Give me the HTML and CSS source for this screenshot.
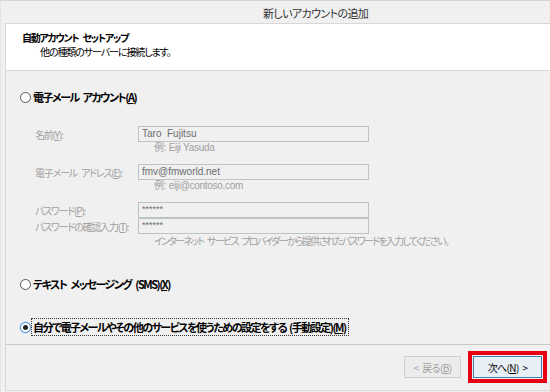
FILE: index.html
```html
<!DOCTYPE html>
<html lang="ja">
<head>
    <meta charset="UTF-8">
    <title>新しいアカウントの追加</title>
    <link rel="stylesheet" href="styles.css">
</head>
<body>
    <div class="window">
        <div class="titlebar">新しいアカウントの追加</div>

        <div class="dialog">
            <div class="header">
                <div class="header-title">自動アカウント セットアップ</div>
                <div class="header-sub">他の種類のサーバーに接続します。</div>
            </div>

            <div class="content">
                <label class="option option-first">
                    <span class="radio"></span>
                    <span class="option-text">電子メール アカウント(<u>A</u>)</span>
                </label>

                <div class="field field-name">
                    <span class="field-label">名前(<u>Y</u>):</span>
                    <span class="textbox">Taro&nbsp; Fujitsu</span>
                </div>
                <div class="hint">例: Eiji Yasuda</div>

                <div class="field field-gap">
                    <span class="field-label">電子メール アドレス(<u>E</u>):</span>
                    <span class="textbox">fmv@fmworld.net</span>
                </div>
                <div class="hint">例: eiji@contoso.com</div>

                <div class="field field-gap">
                    <span class="field-label">パスワード(<u>P</u>):</span>
                    <span class="textbox textbox-pass">******</span>
                </div>
                <div class="field">
                    <span class="field-label">パスワードの確認入力(<u>T</u>):</span>
                    <span class="textbox textbox-pass">******</span>
                </div>
                <div class="hint hint-long">インターネット サービス プロバイダーから提供されたパスワードを入力してください。</div>

                <label class="option option-sms">
                    <span class="radio"></span>
                    <span class="option-text">テキスト メッセージング (SMS)(<u>X</u>)</span>
                </label>

                <label class="option option-manual">
                    <span class="radio radio-checked"></span>
                    <span class="option-text option-focus">自分で電子メールやその他のサービスを使うための設定をする (手動設定)(<u>M</u>)</span>
                </label>
            </div>

            <div class="footer">
                <button class="btn" disabled>&lt; 戻る(<u>B</u>)</button>
                <div class="highlight">
                    <button class="btn btn-next">次へ(<u>N</u>) &gt;</button>
                </div>
            </div>
        </div>
    </div>
</body>
</html>
```

FILE: styles.css
```css
html, body {
    margin: 0;
    padding: 0;
}

body {
    width: 550px;
    height: 392px;
    overflow: hidden;
    background: #f0f0f0;
    font-family: "Noto Sans CJK JP", sans-serif;
    font-size: 10px;
    letter-spacing: -1px;
    word-spacing: 3px;
    font-feature-settings: "palt";
    color: #000;
}

.window {
    height: 392px;
    box-sizing: border-box;
    border-top: 1px solid #d4d4d4;
    border-left: 1px solid #e4e4e4;
}

.titlebar {
    height: 22px;
    line-height: 24px;
    padding-left: 262px;
    font-size: 11px;
    letter-spacing: -0.6px;
    color: #333;
}

.dialog {
    margin-left: 4px;
    height: 366px;
    border-top: 1px solid #d8d8d8;
    border-left: 1px solid #d8d8d8;
    border-bottom: 1px solid #d8d8d8;
}

/* white banner */
.header {
    height: 47px;
    background: #fff;
    border-bottom: 1px solid #d8d8d8;
    padding-left: 16px;
    box-sizing: border-box;
    padding-top: 6px;
}

.header-title {
    font-size: 10px;
    font-weight: bold;
    letter-spacing: -1.3px;
    line-height: 15px;
}

.header-sub {
    padding-left: 18px;
    line-height: 14px;
    letter-spacing: -1.1px;
}

.content {
    height: 274px;
    padding-left: 14px;
    box-sizing: border-box;
    padding-top: 18px;
    border-bottom: 1px solid #c8c8c8;
}

.option {
    display: flex;
    align-items: center;
    height: 16px;
}

.option-text {
    font-size: 11px;
    font-weight: bold;
    letter-spacing: -1.5px;
    padding: 0 2px 0 1px;
}

.option-sms {
    margin-top: 29px;
}

.option-manual {
    margin-top: 27px;
}

.option-focus {
    outline: 1px dotted #333;
    outline-offset: 0;
    word-spacing: 2px;
}

.radio {
    width: 9px;
    height: 9px;
    border: 1px solid #555;
    border-radius: 50%;
    background: #fff;
    margin-right: 1px;
    box-sizing: content-box;
    display: flex;
    align-items: center;
    justify-content: center;
    flex-shrink: 0;
}

.radio-checked {
    border-color: #3c86c8;
    box-shadow: 0 0 0 1px #cfe3f5;
}

.radio-checked::after {
    content: "";
    width: 5px;
    height: 5px;
    border-radius: 50%;
    background: #222;
}

.field {
    display: flex;
    align-items: center;
    height: 16px;
    color: #a0a0a0;
}

.field-name {
    margin-top: 21px;
}

.field-gap {
    margin-top: 10px;
}

.field-label {
    width: 118px;
    padding-left: 15px;
    box-sizing: border-box;
    flex-shrink: 0;
    white-space: nowrap;
    letter-spacing: -1.2px;
}

.textbox {
    width: 231px;
    height: 16px;
    box-sizing: border-box;
    border: 1px solid #bcc4c4;
    padding-left: 3px;
    line-height: 13px;
    color: #6d6d6d;
    letter-spacing: 0;
    word-spacing: 0;
    font-family: "Liberation Sans", "Noto Sans CJK JP", sans-serif;
}

.textbox-pass {
    font-size: 9px;
}

.hint {
    height: 12px;
    line-height: 12px;
    padding-left: 134px;
    color: #a0a0a0;
    letter-spacing: -0.3px;
    word-spacing: 0;
    font-family: "Liberation Sans", "Noto Sans CJK JP", sans-serif;
}

.hint-long {
    font-family: "Noto Sans CJK JP", sans-serif;
    letter-spacing: -1.7px;
    word-spacing: 3px;
    white-space: nowrap;
    margin-top: 1px;
}

/* bottom buttons */
.footer {
    display: flex;
    justify-content: flex-end;
    align-items: center;
    gap: 7px;
    height: 44px;
    padding-right: 3px;
    box-sizing: border-box;
}

.btn {
    width: 57px;
    height: 22px;
    border: 1px solid #adadad;
    background: #e1e1e1;
    font-family: "Noto Sans CJK JP", sans-serif;
    font-size: 10px;
    letter-spacing: -0.6px;
    word-spacing: 2px;
    font-feature-settings: "palt";
    color: #000;
    padding: 0;
}

.btn:disabled {
    border-color: #d0d0d0;
    background: #ececec;
    color: #a0a0a0;
}

.btn-next {
    width: 69px;
    border-color: #3c7fb1;
    background: #e8eff6;
}

.highlight {
    border: 4px solid #e60012;
    padding: 1px;
    display: flex;
}
```
